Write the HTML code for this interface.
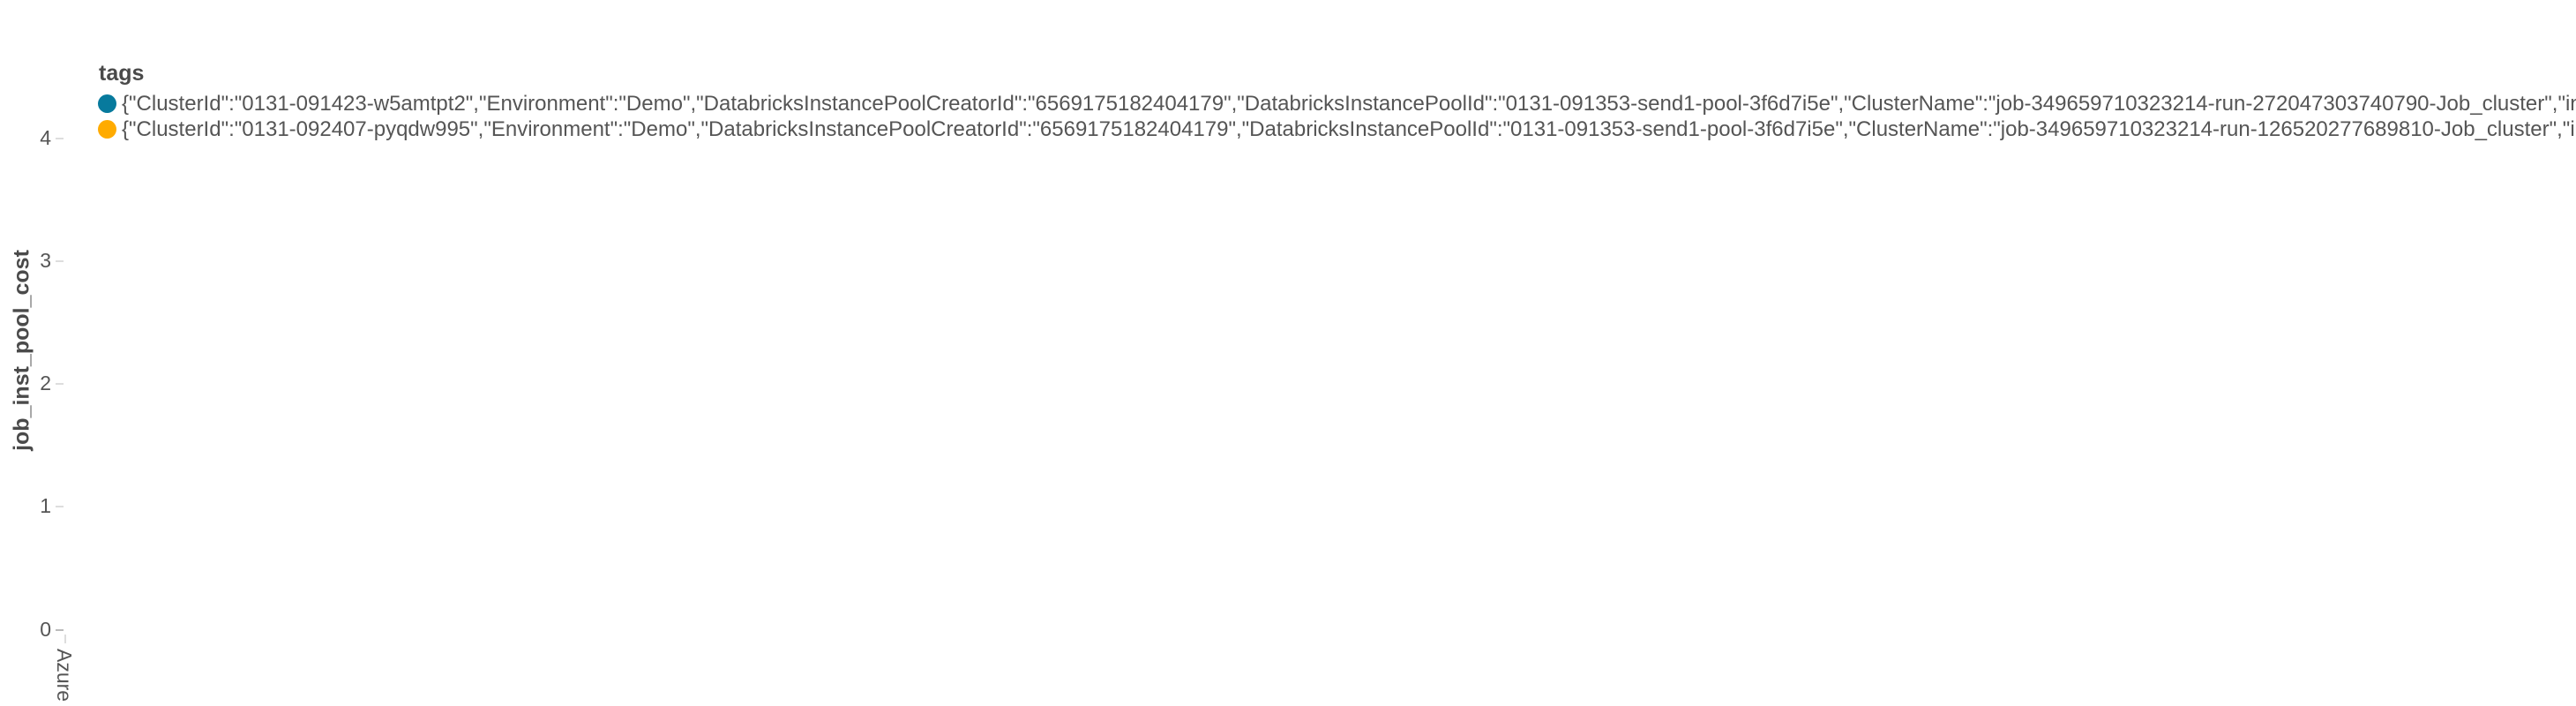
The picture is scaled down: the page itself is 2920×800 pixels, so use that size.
<!DOCTYPE html>
<html><head><style>
body{margin:0;width:2920px;height:800px;background:#fff;overflow:hidden;position:relative;font-family:"Liberation Sans",Arial,sans-serif;color:#555}
.a{position:absolute;white-space:nowrap}
.leg{font-size:24px;left:138px;line-height:28px}
.dot{position:absolute;width:21px;height:21px;border-radius:50%;left:111px}
.yl{font-size:23px;right:2862px;text-align:right}
.tk{position:absolute;left:63px;width:9px;height:2px;background:#ddd}
</style></head><body>
<div class="a" style="left:112px;top:69px;font-size:25px;font-weight:bold;color:#4a4a4a">tags</div>
<div class="dot" style="top:107px;background:#077a9d"></div>
<div class="dot" style="top:136px;background:#ffab00"></div>
<div class="a leg" style="top:104px">{"ClusterId":"0131-091423-w5amtpt2","Environment":"Demo","DatabricksInstancePoolCreatorId":"6569175182404179","DatabricksInstancePoolId":"0131-091353-send1-pool-3f6d7i5e","ClusterName":"job-349659710323214-run-272047303740790-Job_cluster","instance"</div>
<div class="a leg" style="top:133px">{"ClusterId":"0131-092407-pyqdw995","Environment":"Demo","DatabricksInstancePoolCreatorId":"6569175182404179","DatabricksInstancePoolId":"0131-091353-send1-pool-3f6d7i5e","ClusterName":"job-349659710323214-run-126520277689810-Job_cluster","instance"</div>
<div class="a yl" style="top:143px">4</div>
<div class="a yl" style="top:282px">3</div>
<div class="a yl" style="top:421px">2</div>
<div class="a yl" style="top:560px">1</div>
<div class="a yl" style="top:700px">0</div>
<div class="tk" style="top:156px"></div>
<div class="tk" style="top:295px"></div>
<div class="tk" style="top:434px"></div>
<div class="tk" style="top:573px"></div>
<div class="tk" style="top:713px;background:#bbb"></div>
<div style="position:absolute;left:73px;top:719px;width:2px;height:10px;background:#ddd"></div>
<div class="a" style="left:25px;top:397px;font-size:25px;font-weight:bold;color:#4a4a4a;transform:translate(-50%,-50%) rotate(-90deg)">job_inst_pool_cost</div>
<div class="a" style="left:60px;top:735px;font-size:23px;transform-origin:0 0;transform:translate(26px,0) rotate(90deg)">Azure</div>
</body></html>
